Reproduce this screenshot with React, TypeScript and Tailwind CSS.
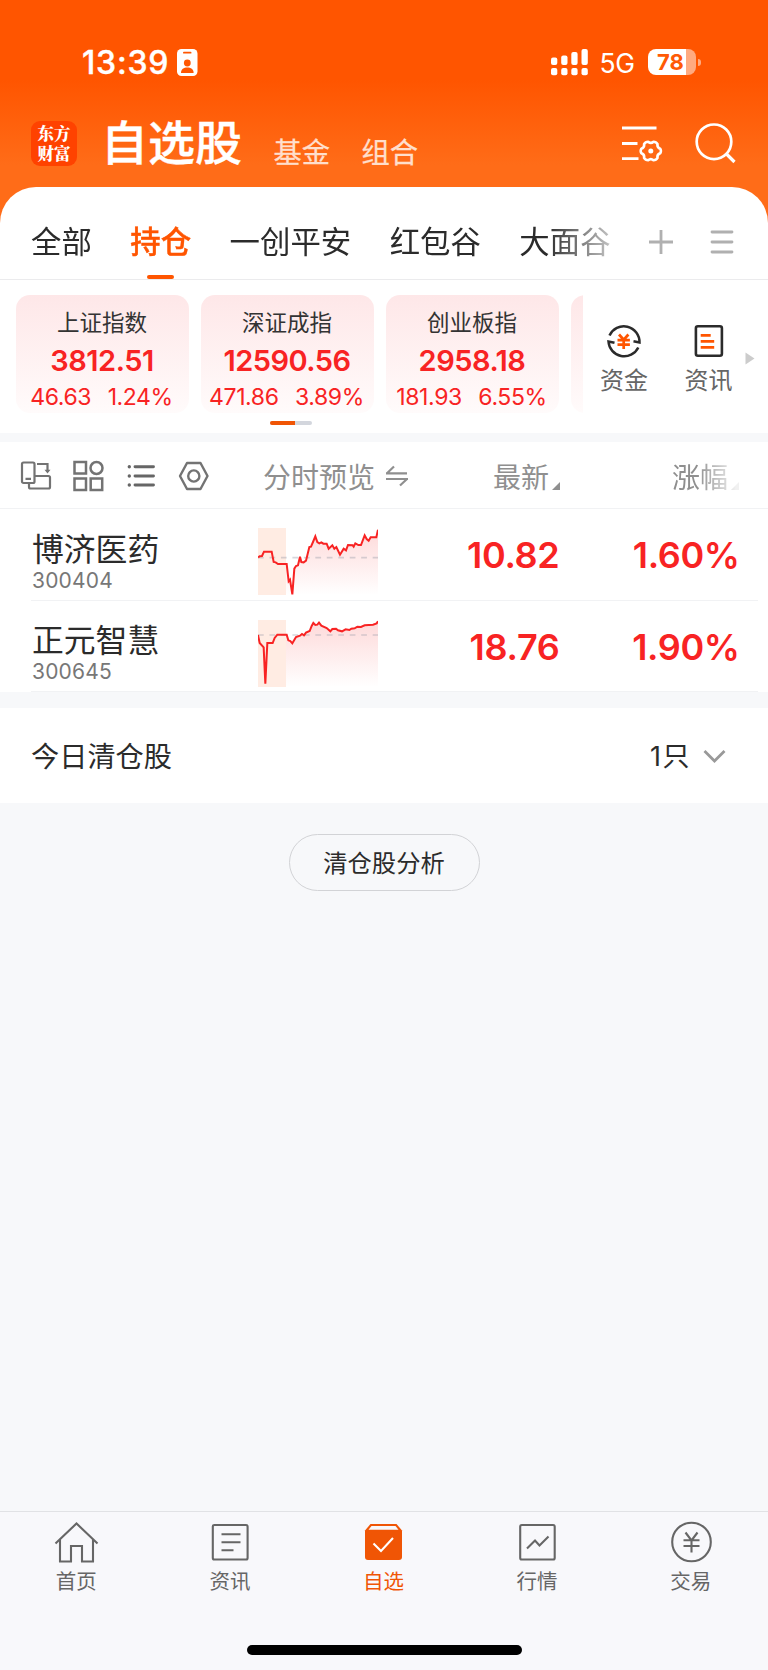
import { useId, type ReactNode } from 'react'

const LISTS = ['全部', '持仓', '一创平安', '红包谷', '大面谷']

const INDICES = [
  { name: '上证指数', value: '3812.51', change: '46.63', percent: '1.24%' },
  { name: '深证成指', value: '12590.56', change: '471.86', percent: '3.89%' },
  { name: '创业板指', value: '2958.18', change: '181.93', percent: '6.55%' },
]

const STOCKS = [
  {
    name: '博济医药',
    code: '300404',
    price: '10.82',
    percent: '1.60%',
    base: 89,
    points:
      '0,88 5,85 12,84 18,71 41,71 47,102 53,103 60,108 86,108 92,160 96,155 103,199 109,122 114,114 120,112 126,86 130,102 137,103 144,98 154,57 159,56 165,42 172,25 178,42 184,46 190,43 196,47 206,47 212,62 223,52 229,62 235,57 246,80 257,62 264,67 270,51 284,52 287,56 292,46 301,51 309,51 320,22 326,33 332,38 338,28 355,28 360,5',
  },
  {
    name: '正元智慧',
    code: '300645',
    price: '18.76',
    percent: '1.90%',
    base: 45,
    points:
      '0,45 5,69 17,82 22,191 28,69 44,69 50,54 58,44 86,44 91,61 97,63 103,70 114,51 126,47 132,42 138,46 144,38 155,33 161,18 166,9 172,15 178,14 183,8 190,17 206,24 217,34 223,27 234,26 240,31 252,34 263,28 274,30 280,26 290,25 298,20 309,21 320,16 345,14 356,10 360,4',
  },
]

export default function App() {
  return (
    <div className="flex h-[1670px] w-[768px] flex-col overflow-hidden bg-[#f7f8fa] font-['Inter','Noto_Sans_CJK_SC',sans-serif] text-[#2b2b2b]">
      <div className="bg-[linear-gradient(180deg,#ff5500_0px,#ff5500_80px,#ff6c18_165px,#ff6c18_230px)]">
        <StatusBar />
        <Header />
        <div className="rounded-t-[36px] bg-white">
          <ListTabs />
        </div>
      </div>
      <IndexStrip />
      <div className="mt-[9px] bg-white">
        <TableHeader />
        {STOCKS.map((s) => (
          <StockRow key={s.code} {...s} />
        ))}
      </div>

      {/* Positions closed today */}
      <div className="mt-[16px] flex h-[95px] items-center bg-white pr-[42px] pl-[31px]">
        <span className="mt-[2px] text-[28.2px] leading-[40px]">今日清仓股</span>
        <span className="mt-[2px] ml-auto text-[27px] leading-[40px] tracking-[1.5px]">1只</span>
        <svg className="ml-[12px]" width="23" height="14" viewBox="0 0 23 14" fill="none" stroke="#999" strokeWidth="2.8">
          <path d="M1.5 2 11.5 12 21.5 2" />
        </svg>
      </div>
      <button className="mt-[31px] h-[57px] w-[191px] self-center rounded-full border border-[#d2d3d6] text-[24.3px] leading-[36px]">
        清仓股分析
      </button>

      <BottomNav />
    </div>
  )
}

function StatusBar() {
  return (
    <div className="flex h-[100px] items-start pt-[42px] pl-[82px] text-white">
      <span className="mt-[1px] w-[87px] whitespace-nowrap text-[32px] leading-[40px] font-medium tracking-[0.8px] [-webkit-text-stroke:0.4px_#fff]">13:39</span>
      <svg className="mt-[7px] ml-[8px]" width="21" height="27" viewBox="0 0 21 27">
        <rect width="20.5" height="27" rx="4.5" fill="#fff" />
        <rect x="6" y="2.8" width="8.5" height="1.8" rx="0.9" fill="#ff5500" />
        <circle cx="10.3" cy="14" r="3.4" fill="#ff5500" />
        <path d="M4 24c0-4 2.800-5.500 6.300-5.500s6.300 1.500 6.300 5.500z" fill="#ff5500" />
      </svg>
      <svg className="mt-[7px] ml-[353px]" width="38" height="27" viewBox="0 0 38 27" fill="#fff">
        <rect x="0" y="8.500" width="6.300" height="7.500" rx="2" />
        <rect x="10.200" y="6.500" width="6.300" height="9.500" rx="2" />
        <rect x="20.300" y="3" width="6.300" height="13" rx="2" />
        <rect x="30.500" y="0" width="6.300" height="16" rx="2" />
        <rect x="0" y="19" width="6.300" height="7.300" rx="2" />
        <rect x="10.200" y="19" width="6.300" height="7.300" rx="2" />
        <rect x="20.300" y="19" width="6.300" height="7.300" rx="2" />
        <rect x="30.500" y="19" width="6.300" height="7.300" rx="2" />
      </svg>
      <span className="mt-[1px] ml-[10.5px] w-[36.5px] text-[26.5px] leading-[40px] tracking-[-0.4px]">5G</span>
      <div className="mt-[7px] ml-[12px] flex h-[26px] w-[48px] overflow-hidden rounded-[8px] bg-[linear-gradient(90deg,#fff_38px,#ffaa80_38px)]">
        <span className="w-[45px] text-center text-[22px] leading-[27px] font-bold text-[#ff5a05]">78</span>
      </div>
      <div className="mt-[17px] ml-[2px] h-[7px] w-[2.5px] rounded-r-full bg-[#ffaa80]" />
    </div>
  )
}

function Header() {
  return (
    <div className="flex h-[87px] items-start pl-[31px] text-white">
      <div className="mt-[21px] flex h-[45px] w-[46px] flex-col items-center justify-center rounded-[9px] bg-[#ff4200] font-['Inter','Noto_Serif_CJK_SC','Noto_Sans_CJK_SC',serif] text-[16.5px] leading-[20px] font-black">
        <span>东方</span>
        <span>财富</span>
      </div>
      <h1 className="mt-[13px] ml-[24px] w-[144px] whitespace-nowrap text-[47px] leading-[60px] font-medium [-webkit-text-stroke:0.4px_#fff]">自选股</h1>
      <span className="mt-[33px] ml-[28.5px] w-[60px] text-[28.3px] leading-[40px] text-[#ffdfcc] [-webkit-text-stroke:0.3px_#ffdfcc]">基金</span>
      <span className="mt-[33px] ml-[28px] w-[60px] text-[28.3px] leading-[40px] text-[#ffdfcc] [-webkit-text-stroke:0.3px_#ffdfcc]">组合</span>
      <svg className="mt-[24px] ml-[199px]" width="42" height="40" viewBox="0 0 42 40" fill="none" stroke="#fff" strokeWidth="2.8">
        <path d="M1 4h34.500M1 19.500h15.500M1 34.600h16.500" />
        <path
          transform="translate(29.8 27)"
          d="M9.410-2.350Q10.800 0 9.410 2.350Q6.060 3.500 6.740 6.980Q5.400 9.350 2.670 9.320Q0 7-2.670 9.320Q-5.400 9.350-6.740 6.980Q-6.060 3.500-9.410 2.350Q-10.800 0-9.410-2.350Q-6.060-3.500-6.740-6.980Q-5.400-9.350-2.670-9.320Q0-7 2.670-9.320Q5.400-9.350 6.740-6.980Q6.060-3.500 9.410-2.350Z"
          strokeLinejoin="round"
          strokeWidth="2.6"
        />
        <circle cx="29.800" cy="27" r="2.500" fill="#fff" stroke="none" />
      </svg>
      <svg className="mt-[22px] ml-[31px]" width="42" height="42" viewBox="0 0 42 42" fill="none" stroke="#fff" strokeWidth="2.700">
        <circle cx="20" cy="19.800" r="17.300" />
        <path d="M32 31.500 40.500 40" strokeWidth="3.2" />
      </svg>
    </div>
  )
}

function ListTabs() {
  return (
    <div className="flex h-[93px] items-center border-b border-[#ebebed] pl-[31px]">
      <div className="flex h-full w-[590px] items-stretch gap-[38.5px] overflow-hidden whitespace-nowrap text-[30.4px] leading-[40px] [mask-image:linear-gradient(90deg,#000_515px,transparent_605px)]">
        {LISTS.map((name) => (
          <Tab key={name} name={name} active={name === '持仓'} />
        ))}
      </div>
      <svg className="mt-[17px] ml-[27px]" width="26" height="26" viewBox="0 0 26 26" stroke="#b0b0b0" strokeWidth="2.800">
        <path d="M13 1v24M1 13h24" />
      </svg>
      <svg className="mt-[17px] ml-[36px]" width="24" height="26" viewBox="0 0 24 26" stroke="#b0b0b0" strokeWidth="2.800" strokeLinecap="round">
        <path d="M2 3h20M2 13h20M2 23h20" />
      </svg>
    </div>
  )
}

function Tab({ name, active }: { name: string; active: boolean }) {
  if (active) {
    return (
      <div className="flex flex-col items-center pt-[35px] font-medium text-[#ff5500] [-webkit-text-stroke:0.4px_#ff5500]">
        {name}
        <div className="mt-auto h-[4px] w-[27px] rounded-full bg-[#ff5500]" />
      </div>
    )
  }
  return <div className="pt-[35px]">{name}</div>
}

function IndexStrip() {
  return (
    <div className="flex h-[153px] bg-white">
      <div className="flex w-[583px] flex-col overflow-hidden pt-[15px] pl-[16px]">
        <div className="flex gap-[12px]">
          {INDICES.map((i) => (
            <div
              key={i.name}
              className="flex h-[118px] w-[173px] shrink-0 flex-col items-center rounded-[14px] bg-gradient-to-b from-[#fee7e8] to-[#fffbfb] pt-[13px] text-[#f82323]"
            >
              <div className="mr-px text-[22.5px] leading-[30px] text-[#333]">{i.name}</div>
              <div className="mt-[2.5px] mr-px text-[29px] leading-[40px] font-semibold tracking-[-0.5px]">{i.value}</div>
              <div className="mt-[1px] mr-[2px] flex gap-[16.5px] text-[23px] leading-[30px] tracking-[-0.4px]">
                <span>{i.change}</span>
                <span>{i.percent}</span>
              </div>
            </div>
          ))}
          <div className="h-[118px] w-[173px] shrink-0 rounded-[14px] bg-gradient-to-b from-[#fee7e8] to-[#fffbfb]" />
        </div>
        <div className="mt-[8px] ml-[254px] flex h-[4px] w-[42px] overflow-hidden rounded-full bg-[#d3d6dd]">
          <div className="w-[25px] bg-[#f05505]" />
        </div>
      </div>
      <div className="flex pt-[43px] text-[24px] leading-[34px] text-[#666]">
        <div className="ml-[16px] flex w-[50px] flex-col items-center">
          <svg width="36" height="36" viewBox="0 0 36 36" fill="none" stroke="#2b2b2b" strokeWidth="2.500">
            <path d="M3.500 12.500A15.700 15.700 0 0 1 33.500 19.500L27.500 18.300" />
            <path d="M32.300 24.500A15.700 15.700 0 0 1 2.500 18.500L8.500 19.800" />
            <path d="M13 11.500 17.700 16.700 22.400 11.500M11.500 17.200h12.400M11.500 21.700h12.400M17.700 16.700v9.300" stroke="#ff5500" strokeWidth="2.700" />
          </svg>
          <span className="mt-[5px] whitespace-nowrap">资金</span>
        </div>
        <div className="ml-[34.5px] flex w-[50px] flex-col items-center">
          <svg width="36" height="36" viewBox="0 0 36 36" fill="none" stroke="#2b2b2b" strokeWidth="2.600">
            <rect x="4.900" y="3.200" width="26" height="29.500" rx="2" />
            <path d="M9.700 12.400h10M9.700 18.300h13.500M9.700 24.300h13.500" stroke="#ff5500" strokeWidth="2.700" />
          </svg>
          <span className="mt-[5px] whitespace-nowrap">资讯</span>
        </div>
        <svg className="mt-[29px] ml-[11px]" width="10" height="13" viewBox="0 0 10 13" fill="#ccc">
          <path d="M.5.5 9.500 6.500.5 12.500z" />
        </svg>
      </div>
    </div>
  )
}

function TableHeader() {
  return (
    <div className="flex h-[67px] items-center border-b border-[#f1f2f4] pl-[20px] text-[28px] leading-[40px] text-[#8f8f8f]">
      <svg className="mt-[1px]" width="32" height="32" viewBox="0 0 32 32" fill="none" stroke="#737373" strokeWidth="2.2">
        <rect x="2" y="2.500" width="12.500" height="20.500" rx="1.500" />
        <path d="M5.500 18.800h5.500M17 4h10.500v8M9 23.500v3.500q0 1.500 1.500 1.500h18q1.500 0 1.500-1.500v-9.500q0-1.500-1.500-1.500H15" />
        <path d="M24.500 9.800h6l-3 3.700z" fill="#737373" stroke="none" />
      </svg>
      <svg className="mt-[1px] ml-[20px]" width="32" height="32" viewBox="0 0 32 32" fill="none" stroke="#737373" strokeWidth="2.500">
        <rect x="2.500" y="2" width="11.500" height="11.500" />
        <circle cx="24.500" cy="8" r="6" />
        <rect x="2.500" y="18.500" width="11.500" height="11.500" />
        <rect x="18.700" y="18.500" width="11.500" height="11.500" />
      </svg>
      <svg className="mt-[1px] ml-[22px]" width="30" height="32" viewBox="0 0 30 32" fill="none" stroke="#666" strokeWidth="2.900" strokeLinecap="round">
        <path d="M3.300 6.700h.01M3.300 16h.01M3.300 25h.01" strokeWidth="3.400" />
        <path d="M9 6.700h18.500M9 16h18.500M9 25h18.500" />
      </svg>
      <svg className="mt-[1px] ml-[22px]" width="32" height="32" viewBox="0 0 32 32" fill="none" stroke="#737373" strokeWidth="2.400" strokeLinejoin="round">
        <path d="M9 3h13.500l7 13-7 13H9L2 16z" />
        <circle cx="15.800" cy="16" r="5.600" />
      </svg>
      <span className="mt-[5px] ml-[53px] w-[112px] whitespace-nowrap">分时预览</span>
      <svg className="mt-[1px] ml-[11px]" width="22" height="24" viewBox="0 0 22 24" fill="none" stroke="#8f8f8f" strokeWidth="2.200">
        <path d="M0 9.300h21M1 9.300 8 2.500M22 15H0M21 15l-7 6.500" />
      </svg>
      <span className="mt-[5px] ml-[85px] w-[56px]">最新</span>
      <svg className="mt-[21px] ml-[3px]" width="8" height="8" viewBox="0 0 8 8" fill="#8f8f8f">
        <path d="M8 0v8H0z" />
      </svg>
      <div className="ml-[112px] flex items-center [mask-image:linear-gradient(90deg,#000_25px,rgba(0,0,0,0.12)_64px)]">
        <span className="mt-[5px] w-[56px]">涨幅</span>
        <svg className="mt-[21px] ml-[3px]" width="8" height="8" viewBox="0 0 8 8" fill="#8f8f8f">
          <path d="M8 0v8H0z" />
        </svg>
      </div>
    </div>
  )
}

function StockRow({ name, code, price, percent, base, points }: (typeof STOCKS)[number]) {
  return (
    <div className="mr-[10px] ml-[31px] flex h-[91.5px] items-start border-b border-[#f1f2f4]">
      <div className="w-[227px] pt-[20.5px]">
        <div className="ml-[1px] text-[31.8px] leading-[40px]">{name}</div>
        <div className="ml-[1px] text-[21px] leading-[22px] tracking-[0.2px] text-[#777]">{code}</div>
      </div>
      <div className="mt-[19px]">
        <Sparkline base={base} points={points} />
      </div>
      <div className="w-[181.5px] pt-[24px] text-right text-[36px] leading-[44px] font-semibold tracking-[-0.3px] text-[#f82323]">
        {price}
      </div>
      <div className="w-[180px] pt-[24px] text-right text-[36px] leading-[44px] font-semibold tracking-[-0.4px] text-[#f82323]">
        {percent}
      </div>
    </div>
  )
}

function Sparkline({ base, points }: { base: number; points: string }) {
  const id = useId()
  return (
    <svg width="120" height="67" viewBox="0 0 360 201" fill="none">
      <defs>
        <linearGradient id={id} x1="0" y1="0" x2="0" y2="1">
          <stop offset="0" stopColor="#f82323" stopOpacity="0.17" />
          <stop offset="1" stopColor="#f82323" stopOpacity="0" />
        </linearGradient>
        <clipPath id={id + 'c'}>
          <rect x="84" width="276" height="201" />
        </clipPath>
      </defs>
      <rect width="84" height="201" fill="#ffece3" />
      <polygon points={'0,201 ' + points + ' 360,201'} fill={'url(#' + id + ')'} clipPath={'url(#' + id + 'c)'} />
      <path d={'M0 ' + base + 'H360'} stroke="#999ca8" strokeOpacity="0.4" strokeWidth="5" strokeDasharray="17.200" />
      <polyline points={points} stroke="#f82323" strokeWidth="6" />
    </svg>
  )
}

function BottomNav() {
  return (
    <div className="mt-auto h-[159px] border-t border-[#e1e2e5] bg-[#f8f8fb]">
      <div className="grid h-[133px] grid-cols-5">
        <NavItem label="首页">
          <path d="M1.500 22.500 22.500 2.500 43.500 22.500M6 18.500V40.500H17V25H28V40.500H39V18.500" />
        </NavItem>
        <NavItem label="资讯">
          <rect x="4.800" y="4" width="34.800" height="34.500" rx="1.500" />
          <path d="M13.500 13.200h19M13.500 21.300h19M13.500 29.300h12" />
        </NavItem>
        <NavItem label="自选" active>
          <path d="M4 9.500 9.500 3h26L41 9.500V36q0 3-3 3H7q-3 0-3-3z" fill="#f05505" stroke="none" />
          <path d="M7.500 8.800 10.500 5h24l3 3.800z" fill="#f8f8fb" stroke="none" />
          <path d="M12.500 22.500l7.500 7.500 12-13" stroke="#fff" />
        </NavItem>
        <NavItem label="行情">
          <rect x="5.200" y="4" width="34.500" height="34.500" rx="1.500" />
          <path d="M12 27.500 20 19.500 24.500 24.500 33.500 15.500" />
        </NavItem>
        <NavItem label="交易">
          <circle cx="22.500" cy="21" r="19.300" />
          <path d="M16.500 11.500 22.500 19.500 28.500 11.500M14.500 19.200h16M14.500 25h16M22.500 19.500v12" />
        </NavItem>
      </div>
      <div className="mx-auto h-[10px] w-[275px] rounded-full bg-black" />
    </div>
  )
}

function NavItem({ label, active, children }: { label: string; active?: boolean; children: ReactNode }) {
  return (
    <div className={active ? 'flex flex-col items-center text-[#f05505]' : 'flex flex-col items-center text-[#666]'}>
      <svg className="mt-[8.5px]" width="45" height="43" viewBox="0 0 45 43" fill="none" stroke="currentColor" strokeWidth="2.1">
        {children}
      </svg>
      <span className="mt-[3.5px] mr-[1px] text-[20.5px] leading-[30px]">{label}</span>
    </div>
  )
}
